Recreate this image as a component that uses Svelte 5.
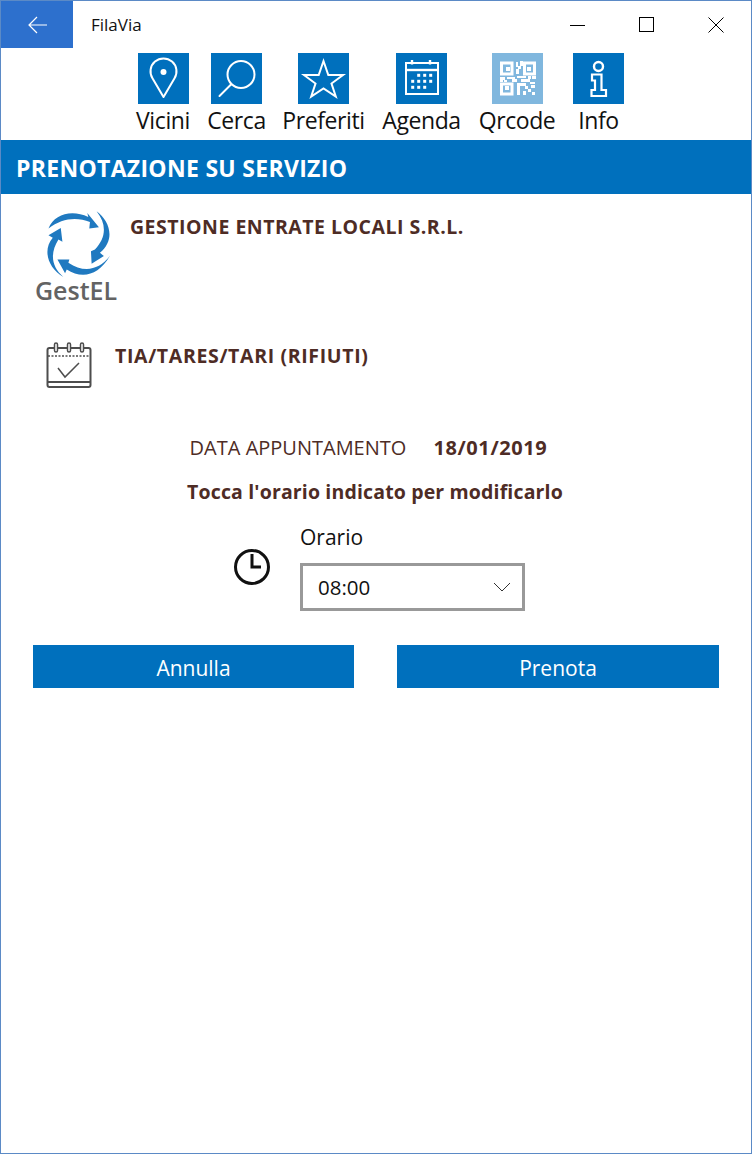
<script lang="ts">
  const tools = [
    { name: "Vicini", kind: "pin" },
    { name: "Cerca", kind: "search" },
    { name: "Preferiti", kind: "star" },
    { name: "Agenda", kind: "cal" },
    { name: "Qrcode", kind: "qr" },
    { name: "Info", kind: "info" }
  ];
  const calDots = [0, 1, 2, 3]
    .flatMap((c) => [0, 1, 2].map((r) => ({ c, r })))
    .filter((d) => !(d.r === 0 && d.c === 0) && !(d.r === 2 && d.c === 3));
  // small blocks of the qr code, x y w h
  const qrBlocks = [
    [14, 14, 4, 4], [35, 14, 4, 4], [13, 33, 4, 4],
    [24, 9, 2, 5], [28, 8, 3, 5], [26, 13, 3, 3], [24, 16, 3, 5],
    [8, 24, 5, 3], [8, 27, 3, 2], [15, 24, 8, 2], [20, 26, 5, 3],
    [25, 23, 9, 2], [36, 23, 3, 3], [40, 23, 4, 3], [29, 26, 9, 3], [38, 29, 5, 2], [12, 27, 3, 2],
    [25, 30, 3, 12], [28, 30, 6, 3], [33, 33, 3, 3], [39, 32, 4, 3], [36, 36, 3, 3], [31, 38, 3, 4], [40, 39, 3, 3]
  ];
</script>

<div class="window">
  <header class="titlebar">
    <button class="back" aria-label="Indietro">
      <svg width="20" height="18" viewBox="0 0 20 18"><path d="M19 9H1.5M9 1 1 9l8 8" fill="none" stroke="#fff" stroke-width="1.2" /></svg>
    </button>
    <span class="app-name">FilaVia</span>
    <div class="win-buttons">
      <svg width="16" height="16" viewBox="0 0 16 16"><path d="M0 8.500h15" stroke="#000" stroke-width="1" /></svg>
      <svg width="16" height="16" viewBox="0 0 16 16"><rect x="0.500" y="0.500" width="14" height="14" fill="none" stroke="#000" stroke-width="1" /></svg>
      <svg width="16" height="16" viewBox="0 0 16 16"><path d="M0.500 0.500l15 15M15.500 0.500l-15 15" stroke="#000" stroke-width="1" /></svg>
    </div>
  </header>

  <nav class="toolbar">
    {#each tools as tool}
      <div class="tool">
        <div class="tool-icon" class:disabled={tool.kind === "qr"}>
          <svg width="51" height="51" viewBox="0 0 51 51" fill="none" stroke="#fff" stroke-width="2">
            {#if tool.kind === "pin"}
              <path d="M25.500 44 L14.600 25.500 A13 13 0 1 1 36.400 25.500 Z" stroke-linejoin="round" />
              <circle cx="25.500" cy="19" r="3" fill="#fff" stroke="none" />
            {:else if tool.kind === "search"}
              <circle cx="30" cy="21.500" r="13.500" />
              <path d="M20 31.500 8.500 43" stroke-linecap="round" />
            {:else if tool.kind === "star"}
              <path d="M25.500 8 30.300 22H45L33.500 30.500 37.800 43.500 25.500 35.500 13.200 43.500 17.500 30.500 6 22H20.700Z" />
            {:else if tool.kind === "cal"}
              <rect x="10" y="10" width="32" height="31" />
              <path d="M10 17h32" stroke-width="2.400" />
              <path d="M16 7v4.500M34 7v4.500" stroke-width="2.400" />
              {#each calDots as d}
                <rect x={15.2 + d.c * 6} y={20.8 + d.r * 6} width="3" height="3" fill="#fff" stroke="none" />
              {/each}
            {:else if tool.kind === "qr"}
              <g stroke-width="3">
                <rect x="9.500" y="10" width="10.500" height="11" />
                <rect x="32.500" y="10" width="10" height="11" />
                <rect x="9.500" y="31" width="10.500" height="10" />
              </g>
              <g fill="#fff" stroke="none">
                {#each qrBlocks as [x, y, w, h]}
                  <rect {x} {y} width={w} height={h} />
                {/each}
              </g>
            {:else}
              <circle cx="25.500" cy="13.500" r="4.500" stroke-width="2.400" />
              <path d="M19 21.500h9.500V37H33v6H18.500v-6h3.500v-9.500H19Z" stroke-width="2.200" />
            {/if}
          </svg>
        </div>
        <span class="tool-label">{tool.name}</span>
      </div>
    {/each}
  </nav>

  <h1 class="page-title">PRENOTAZIONE SU SERVIZIO</h1>

  <section class="company">
    <div class="logo">
      <svg width="70" height="73" viewBox="45 10 210 220" fill="#1f79c0">
        <path d="M55 72C72 28 125 14 175 37L172 25 207 68 178 72 180 52C140 36 95 40 55 72Z" />
        <path d="M200 20C240 50 258 105 210 145L222 155 185 178 183 140 195 135C228 100 232 60 200 20Z" />
        <path d="M240 155C205 215 155 225 110 195L105 207 82 165 118 165 115 175C160 205 205 200 240 155Z" />
        <path d="M100 218C52 190 37 135 68 100L55 92 92 70 97 112 85 105C60 145 62 185 100 218Z" />
      </svg>
      <span class="logo-text">GestEL</span>
    </div>
    <h2 class="company-name">GESTIONE ENTRATE LOCALI S.R.L.</h2>
  </section>

  <section class="service">
    <svg class="service-icon" width="48" height="48" viewBox="0 0 48 48" fill="none" stroke="#4d4d4d">
      <rect x="2.500" y="7" width="43" height="39" rx="2" stroke-width="2" />
      <path d="M3 15h42" stroke-width="1.500" stroke-dasharray="2 1.500" />
      <path d="M3 41h42" stroke-width="2" />
      <g stroke-width="1.500" fill="#fff">
        <rect x="9.500" y="2" width="3" height="9" rx="1.500" />
        <rect x="22.500" y="2" width="3" height="9" rx="1.500" />
        <rect x="35.500" y="2" width="3" height="9" rx="1.500" />
      </g>
      <path d="M13 27l7 9 14-14" stroke-width="1.500" />
    </svg>
    <h2 class="service-name">TIA/TARES/TARI (RIFIUTI)</h2>
  </section>

  <div class="date-row">
    <span class="date-label">DATA APPUNTAMENTO</span>
    <strong class="date-value">18/01/2019</strong>
  </div>
  <p class="hint">Tocca l'orario indicato per modificarlo</p>

  <div class="time-row">
    <svg class="clock" width="38" height="38" viewBox="0 0 38 38" fill="none" stroke="#111">
      <circle cx="19" cy="19" r="16.500" stroke-width="3" />
      <path d="M19 6v13h9" stroke-width="3" />
    </svg>
    <div class="time-field">
      <span class="time-label">Orario</span>
      <div class="select">
        <span class="select-value">08:00</span>
        <svg width="18" height="10" viewBox="0 0 18 10" fill="none"><path d="M1 1l8 8 8-8" stroke="#333" stroke-width="1" /></svg>
      </div>
    </div>
  </div>

  <div class="actions">
    <button class="action">Annulla</button>
    <button class="action">Prenota</button>
  </div>
</div>

<style>
  :global(body) {
    margin: 0;
    background: #fff;
  }

  .window {
    box-sizing: border-box;
    width: 752px;
    height: 1154px;
    border: 1px solid #5b8ac6;
    background: #fff;
    font-family: "Open Sans", "Noto Sans", sans-serif;
    color: #000;
    overflow: hidden;
  }

  .titlebar {
    display: flex;
    align-items: center;
    height: 47px;
  }

  .back {
    display: flex;
    align-items: center;
    justify-content: center;
    width: 72px;
    height: 47px;
    padding: 0 0 0 2px;
    border: 0;
    background: #2d70cd;
  }

  .app-name {
    margin-left: 18px;
    font-size: 17px;
    color: #111;
  }

  .win-buttons {
    display: flex;
    gap: 53px;
    margin-left: auto;
    margin-right: 27px;
  }

  .toolbar {
    display: grid;
    grid-template-columns: 54px 57px 81px 79px 76px 51px;
    column-gap: 18px;
    height: 92px;
    padding-left: 135px;
  }

  .tool {
    display: flex;
    flex-direction: column;
    align-items: center;
  }

  .tool-icon {
    width: 51px;
    height: 51px;
    margin-top: 5px;
    background: #0070bd;
  }

  .tool-icon.disabled {
    background: #80b7de;
  }

  .tool-icon svg {
    display: block;
  }

  .tool-label {
    font-size: 23px;
    line-height: 33px;
    white-space: nowrap;
    letter-spacing: -0.4px;
    color: #111;
  }

  .page-title {
    margin: 0;
    height: 54px;
    padding-left: 15px;
    background: #0070bd;
    color: #fff;
    font-size: 23px;
    font-weight: 700;
    line-height: 56px;
    letter-spacing: 0.3px;
  }

  .company {
    display: flex;
    height: 130px;
    padding: 14px 0 0 31px;
    box-sizing: border-box;
  }

  .logo {
    display: flex;
    flex-direction: column;
    align-items: center;
    width: 88px;
  }

  .logo svg {
    display: block;
    margin-left: 8px;
  }

  .logo-text {
    margin-top: -6px;
    font-size: 25px;
    font-weight: 600;
    line-height: 30px;
    color: #636363;
  }

  .company-name,
  .service-name {
    margin: 6px 0 0 10px;
    font-size: 19.500px;
    font-weight: 700;
    line-height: 26px;
    color: #4e2c25;
    letter-spacing: 0.5px;
  }

  .service {
    display: flex;
    height: 109px;
    padding: 6px 0 0 44px;
    box-sizing: border-box;
  }

  .service-icon {
    flex: none;
    margin-top: 11px;
  }

  .service-name {
    margin: 13px 0 0 22px;
    letter-spacing: 0.65px;
  }

  .date-row {
    display: flex;
    justify-content: center;
    align-items: baseline;
    gap: 27px;
    height: 30px;
    padding-right: 15px;
    line-height: 30px;
    font-size: 20px;
    color: #4e2c25;
  }

  .date-value {
    font-weight: 700;
    letter-spacing: 0.6px;
  }

  .hint {
    margin: 14px 0 0;
    height: 30px;
    padding-right: 2px;
    line-height: 30px;
    text-align: center;
    font-size: 19.500px;
    font-weight: 700;
    color: #4e2c25;
    letter-spacing: 0.15px;
  }

  .time-row {
    display: flex;
    margin-top: 15px;
    padding-left: 232px;
  }

  .clock {
    margin-top: 26px;
    flex: none;
  }

  .time-field {
    display: flex;
    flex-direction: column;
    margin-left: 29px;
  }

  .time-label {
    font-size: 21px;
    line-height: 30px;
    color: #111;
  }

  .select {
    box-sizing: border-box;
    display: flex;
    align-items: center;
    justify-content: space-between;
    width: 225px;
    height: 48px;
    margin-top: 11px;
    padding: 0 11px 0 15px;
    border: 3px solid #999;
    font-size: 20.500px;
    color: #111;
  }

  .select-value {
    padding-bottom: 1px;
  }

  .actions {
    display: grid;
    grid-template-columns: 321px 322px;
    column-gap: 43px;
    margin-top: 34px;
    padding-left: 32px;
  }

  .action {
    height: 43px;
    border: 0;
    padding: 2px 0 0;
    background: #0070bd;
    color: #fff;
    font-family: inherit;
    font-size: 21px;
  }
</style>
